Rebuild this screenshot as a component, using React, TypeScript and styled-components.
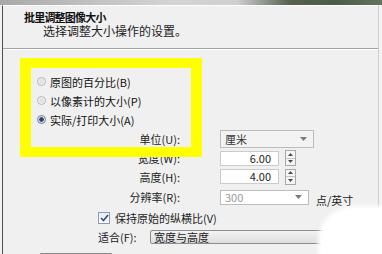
import React from "react";
import styled, { createGlobalStyle } from "styled-components";

const Global = createGlobalStyle`
  html, body { margin: 0; padding: 0; background: #f4f4f4; }
  body {
    width: 382px; height: 254px; overflow: hidden;
    font-family: "Noto Sans CJK SC", "Noto Sans", sans-serif;
    color: #1c1c1c;
  }
`;

const Screen = styled.div`
  position: relative;
  width: 382px;
  height: 254px;
  overflow: hidden;
  background: #f2f2f2;
  display: flex;
  flex-direction: column;
`;

const TopBar = styled.div`
  flex: none;
  height: 5px;
  background: linear-gradient(
    to right,
    #a9a9a9 0%,
    #bdbdbd 20%,
    #d4d4d4 45%,
    #cfcfcf 62%,
    #55604f 76%,
    #4d5c48 88%,
    #64745d 100%
  );
`;

const Window = styled.div`
  flex: 1;
  margin-left: 2px;
  margin-right: 3px;
  border-left: 1px solid #4e4e4e;
  border-right: 1px solid #cdcdcd;
  border-top: 1px solid #ffffff;
  background: #f0f0f0;
  display: flex;
  flex-direction: column;
`;

const Header = styled.div`
  box-sizing: border-box;
  height: 42px;
  padding: 5px 0 0 21px;
`;

const Title = styled.div`
  font-size: 11px;
  line-height: 13px;
  font-weight: 700;
  letter-spacing: -0.8px;
  color: #111;
`;

const Subtitle = styled.div`
  font-size: 12px;
  line-height: 14px;
  padding-left: 19px;
  color: #222;
`;

const Separator = styled.div`
  height: 1px;
  background: #a3a3a3;
  border-bottom: 1px solid #ffffff;
`;

const Content = styled.div`
  position: relative;
  flex: 1;
  padding-top: 22px;
`;

const RadioList = styled.div`
  padding-left: 34px;
  display: flex;
  flex-direction: column;
`;

const RadioRow = styled.label`
  height: 19px;
  display: flex;
  align-items: center;
  gap: 4px;
  font-size: 11px;
  color: #111;
`;

const RadioDot = styled.span<{ $on?: boolean }>`
  box-sizing: border-box;
  width: 9px;
  height: 9px;
  border-radius: 50%;
  border: 1px solid ${(p) => (p.$on ? "#6e7f96" : "#b4b4b4")};
  background: ${(p) =>
    p.$on
      ? "radial-gradient(circle, #2f4466 0 2px, #dfe6ee 2.5px)"
      : "radial-gradient(circle, #e2e2e2 0 2px, #f4f4f4 3px)"};
`;

const Form = styled.div`
  display: grid;
  grid-template-columns: 177px 1fr;
  column-gap: 40px;
  grid-template-rows: 20px 18px 19px 22px 20px 17px;
  align-items: center;
  font-size: 11px;
`;

const Label = styled.div`
  text-align: right;
  color: #222;
`;

const Combo = styled.div<{ $w: number; $h: number; $bg: string; $fg: string }>`
  box-sizing: border-box;
  width: ${(p) => p.$w}px;
  height: ${(p) => p.$h}px;
  border: 1px solid #bcbcbc;
  background: ${(p) => p.$bg};
  color: ${(p) => p.$fg};
  display: flex;
  align-items: center;
  justify-content: space-between;
  padding: 0 6px 0 4px;
`;

const Arrow = () => (
  <svg width="7" height="4" viewBox="0 0 7 4">
    <path d="M0 0 L7 0 L3.5 4 Z" fill="#7a7a7a" />
  </svg>
);

const SpinRow = styled.div`
  display: flex;
  align-items: center;
  gap: 6px;
`;

const NumInput = styled.div`
  box-sizing: border-box;
  width: 59px;
  height: 15px;
  border: 1px solid #cbcbcb;
  background: #ffffff;
  text-align: right;
  padding-right: 7px;
  line-height: 13px;
  color: #222;
`;

const Spinner = styled.div`
  box-sizing: border-box;
  width: 11px;
  height: 16px;
  border: 1px solid #a8a8a8;
  background: #f6f6f6;
  display: flex;
  flex-direction: column;
`;

const SpinHalf = styled.div<{ $top?: boolean }>`
  flex: 1;
  display: flex;
  align-items: center;
  justify-content: center;
  border-bottom: ${(p) => (p.$top ? "1px solid #c4c4c4" : "none")};
`;

const Tri = ({ up }: { up?: boolean }) => (
  <svg width="5" height="3" viewBox="0 0 5 3">
    <path d={up ? "M0 3 L5 3 L2.5 0 Z" : "M0 0 L5 0 L2.5 3 Z"} fill="#4a4a4a" />
  </svg>
);

const ResRow = styled.div`
  display: flex;
  align-items: center;
  gap: 7px;
`;

const Unit = styled.span`
  padding-top: 6px;
  color: #222;
`;

const WideRow = styled.div`
  grid-column: 1 / -1;
  padding-left: 95px;
  display: flex;
  align-items: center;
`;

const CheckBox = styled.span`
  box-sizing: border-box;
  width: 12px;
  height: 12px;
  margin-right: 5px;
  border: 1px solid #8c9cb0;
  background: linear-gradient(#e9eef4, #ffffff);
  display: flex;
  align-items: center;
  justify-content: center;
`;

const FitLabel = styled.span`
  width: 52px;
  color: #222;
`;

const Select = styled.div`
  box-sizing: border-box;
  width: 176px;
  height: 14px;
  border: 1px solid #8d8d8d;
  border-radius: 2px;
  background: linear-gradient(#f3f3f3, #dedede);
  padding-left: 3px;
  line-height: 12px;
  color: #222;
`;

const Footer = styled.div`
  padding: 8px 0 0 37px;
`;

const FooterButton = styled.div`
  width: 70px;
  height: 10px;
  border-top: 1px solid #8a8a8a;
  border-left: 1px solid #b0b0b0;
  border-right: 1px solid #b0b0b0;
  background: linear-gradient(#f6f6f6, #e4e4e4);
`;

const Highlight = styled.div`
  position: absolute;
  left: 17px;
  top: 8px;
  width: 182px;
  height: 99px;
  box-sizing: border-box;
  border-style: solid;
  border-color: #ffff00;
  border-width: 10px 11px 10px 11px;
  pointer-events: none;
`;

const Blob = styled.div`
  position: absolute;
  left: 318px;
  top: 206px;
  width: 90px;
  height: 70px;
  border-radius: 36px 0 0 0;
  background: #ffffff;
  filter: blur(2px);
`;

export default function App() {
  return (
    <Screen>
      <Global />
      <TopBar />
      <Window>
        <Header>
          <Title>批里调整图像大小</Title>
          <Subtitle>选择调整大小操作的设置。</Subtitle>
        </Header>
        <Separator />
        <Content>
          <RadioList>
            <RadioRow>
              <RadioDot />
              原图的百分比(B)
            </RadioRow>
            <RadioRow>
              <RadioDot />
              以像素计的大小(P)
            </RadioRow>
            <RadioRow>
              <RadioDot $on />
              实际/打印大小(A)
            </RadioRow>
          </RadioList>
          <Form>
            <Label>单位(U):</Label>
            <Combo $w={94} $h={18} $bg="#f3f3f3" $fg="#333">
              厘米
              <Arrow />
            </Combo>
            <Label>宽度(W):</Label>
            <SpinRow>
              <NumInput>6.00</NumInput>
              <Spinner>
                <SpinHalf $top>
                  <Tri up />
                </SpinHalf>
                <SpinHalf>
                  <Tri />
                </SpinHalf>
              </Spinner>
            </SpinRow>
            <Label>高度(H):</Label>
            <SpinRow>
              <NumInput>4.00</NumInput>
              <Spinner>
                <SpinHalf $top>
                  <Tri up />
                </SpinHalf>
                <SpinHalf>
                  <Tri />
                </SpinHalf>
              </Spinner>
            </SpinRow>
            <Label>分辨率(R):</Label>
            <ResRow>
              <Combo $w={89} $h={15} $bg="#ffffff" $fg="#9a9a9a">
                300
                <Arrow />
              </Combo>
              <Unit>点/英寸</Unit>
            </ResRow>
            <WideRow>
              <CheckBox>
                <svg width="9" height="8" viewBox="0 0 9 8">
                  <path d="M1 4 L3.5 6.5 L8 1" fill="none" stroke="#2b4f86" strokeWidth="1.6" />
                </svg>
              </CheckBox>
              保持原始的纵横比(V)
            </WideRow>
            <WideRow>
              <FitLabel>适合(F):</FitLabel>
              <Select>宽度与高度</Select>
            </WideRow>
          </Form>
          <Footer>
            <FooterButton />
          </Footer>
          <Highlight />
        </Content>
      </Window>
      <Blob />
    </Screen>
  );
}
